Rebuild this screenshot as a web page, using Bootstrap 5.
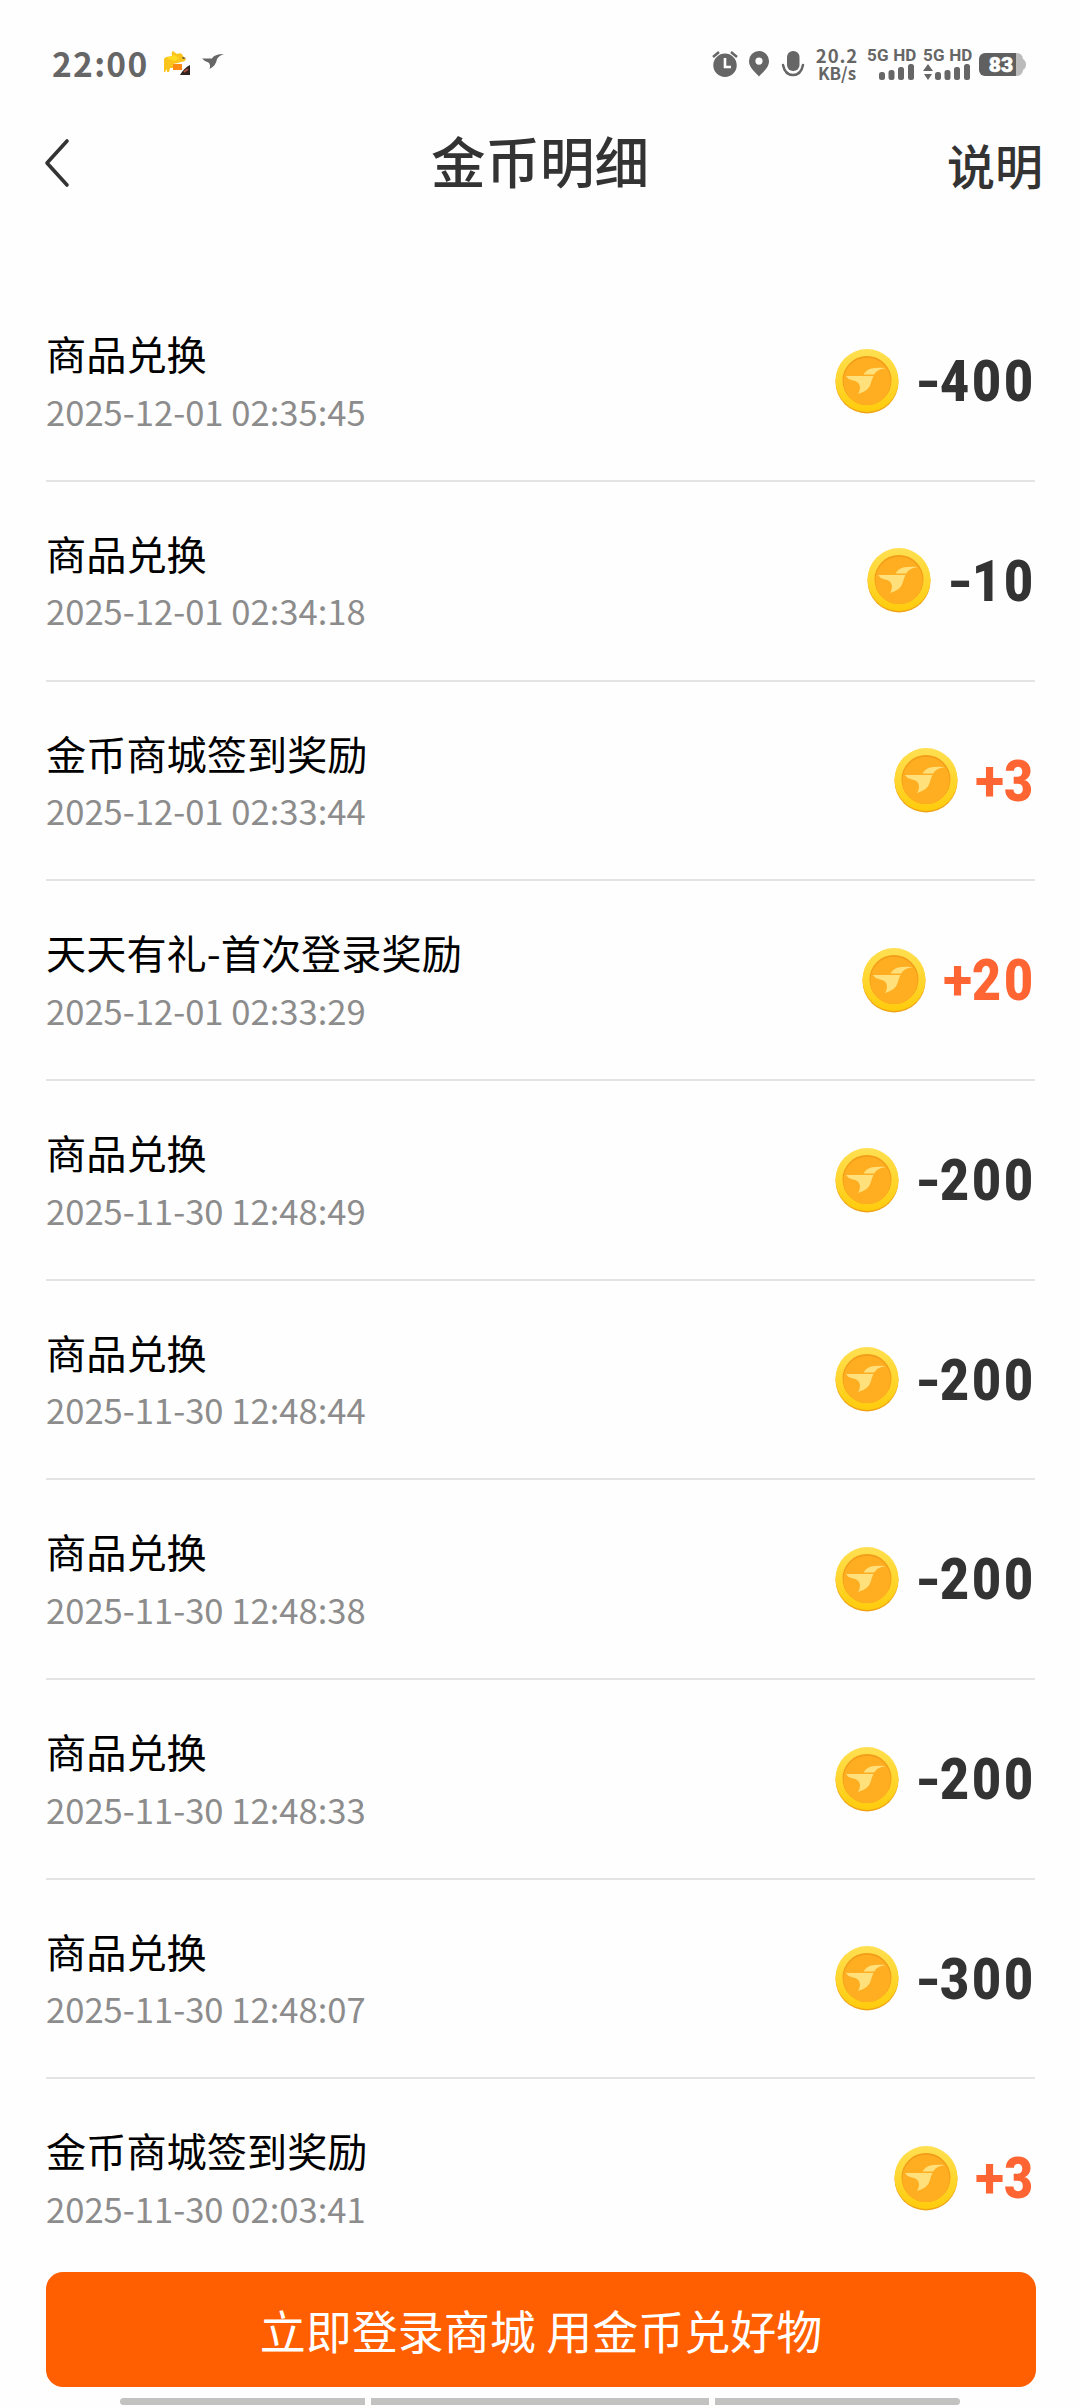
<!DOCTYPE html>
<html lang="zh-CN">
<head>
<meta charset="utf-8">
<meta name="viewport" content="width=device-width, initial-scale=1">
<title>金币明细</title>
<link rel="stylesheet" href="https://cdn.jsdelivr.net/npm/bootstrap@5.3.0/dist/css/bootstrap.min.css">
<style>
body{width:1080px;height:2408px;overflow:hidden;background:#fefefe;font-family:"Noto Sans CJK SC",sans-serif;color:#000}
svg{display:block;flex:none}
.statusbar{height:100px;padding:26px 52px 0 52px;color:#666}
.statusbar .inner{height:76px}
.clock{font-size:33.5px;font-weight:700;line-height:74px;height:76px;letter-spacing:1.3px}
.bird{margin-left:10px}
.indicators{margin-right:1px}
.speed{font-weight:700;font-size:18.5px;line-height:18px;width:44px;letter-spacing:.9px;text-align:center;padding-top:20px;margin-left:-1px}
.speed small{display:block;font-size:17px;letter-spacing:0;font-weight:700}
.sim{width:48px;padding-top:21px}
.sim span{font:700 17px/16px "Roboto",sans-serif;letter-spacing:.2px;white-space:nowrap}
.battery{margin:27px 0 0 8px}
.topbar{height:126px;padding:0 37px 0 44px;color:#333}
.topbar .side{width:120px}
.topbar h1{font-size:54.5px;font-weight:500;line-height:120px;height:126px;padding-right:7px}
.topbar .explain{font-size:48px;font-weight:500;line-height:126px;padding-top:1px}
.records{padding:56.3px 45px 0 46px;height:2046px;overflow:hidden}
.record{height:199.7px;border-bottom:2px solid #e4e4e4;padding-top:43px}
.record:last-child{border-color:transparent}
.record .name{font-size:40.2px;line-height:56px}
.record .time{font-size:34.6px;line-height:50px;margin-top:4.500px;color:#8c8c8c}
.amount{font:700 57px/64px "Roboto",sans-serif;color:#333;padding-top:23px}
.amount.plus{color:#ff6532}
.sign{margin-left:18px;width:22px;display:flex;justify-content:center;padding-top:2px}
.plus .sign{width:27px}
.sign i{font-style:normal;transform:scaleX(1.14)}
.plus .sign i{transform:scaleX(.94)}
.digits{display:flex;padding-top:2px}
.digits b{width:32px;display:flex;justify-content:center}
.digits b i{font-style:normal;transform:scaleX(.88)}
.btn.login{background:#ff5f00;color:#fff;border:0;width:990px;height:115px;border-radius:17px;font-size:46px;line-height:115px;padding:0;margin-left:46px}
.navhint{padding:11px 120px 0;gap:6px}
.navhint span{height:7px;background:#c2c2c0}
.navhint .edge{width:245px}
</style>
</head>
<body>
<header class="statusbar">
  <div class="inner d-flex">
    <div class="clock">22:00</div>
    <svg class="ms-3 mt-4" width="28" height="28" viewBox="0 0 28 28"><path d="M0 9 2 7 8 6Q7 2 9 1L13 4Q18 2 19 6L22 9Q21 12 17 12L14 13 9 14V18L6 18 5 22H3V19L1 22H0Z" fill="#fbc41c"/><path d="M2 8 10 5 15 8 11 11Z" fill="#ffdc22"/><path d="M9 14h9v6H9z" fill="#ff8a13"/><path d="M18 7l4 1-3 1Z" fill="#444"/><path d="M26 15v10H16Q20 18 26 15Z" fill="#30231f"/><path d="m20 22 4-3" stroke="#ad5441" stroke-width="1.8"/></svg>
    <svg class="bird mt-4" width="24" height="24" viewBox="0 0 24 24"><path d="M0 8.500H10Q12 4 22 4Q17 5.500 15 9Q14 16 7.500 19Q9 15 6.500 12.500Q2 11 0 8.500Z" fill="#666"/></svg>
    <div class="indicators d-flex ms-auto">
      <svg width="104" height="76" viewBox="712 26 104 76">
        <g fill="#666"><circle cx="725" cy="65.3" r="11.7"/><path d="m713 57 6-5M737 57l-6-5" stroke="#666" stroke-width="2.5"/><path d="M725 58v9h6" fill="none" stroke="#fff" stroke-width="2.6"/>
        <path fill-rule="evenodd" d="M759 51a10 10 0 0 1 10 10.3C769 68 762 73 759 76.500C756 73 749 68 749 61.300A10 10 0 0 1 759 51Zm0 6.500a3.600 3.600 0 1 0 0 7.200a3.600 3.600 0 0 0 0-7.200Z"/>
        <rect x="787" y="51" width="12.500" height="20" rx="6"/><path d="M783 65Q785 75 793 75T803 65" fill="none" stroke="#666" stroke-width="2.500" stroke-linecap="round"/></g>
      </svg>
      <div class="speed">20.2<small>KB/s</small></div>
      <div class="sim ms-2"><span class="d-block">5G HD</span>
        <svg width="48" height="17" viewBox="0 0 48 17" fill="#666"><rect x="12" y="9" width="6" height="8" rx="2.500"/><rect x="21.500" y="7" width="6" height="10" rx="2.500"/><rect x="31" y="4" width="6" height="13" rx="2.500"/><rect x="41" y="1" width="6" height="16" rx="2.500"/></svg></div>
      <div class="sim ms-2"><span class="d-block">5G HD</span>
        <svg width="48" height="17" viewBox="0 0 48 17" fill="#666"><path d="M0 8 5 1l5 7ZM1 11h8l-4 6Z"/><rect x="12" y="9" width="6" height="8" rx="2.500"/><rect x="21.500" y="7" width="6" height="10" rx="2.500"/><rect x="31" y="4" width="6" height="13" rx="2.500"/><rect x="41" y="1" width="6" height="16" rx="2.500"/></svg></div>
      <svg class="battery" width="48" height="24" viewBox="0 0 48 24"><path d="M36 0h2a6 6 0 0 1 6 6q3 2 3 5.500T44 17a6 6 0 0 1-6 6h-2Z" fill="#bbb"/><path d="M6 0h31v23H6a6 6 0 0 1-6-6V6a6 6 0 0 1 6-6Z" fill="#606060"/><text x="22" y="19" text-anchor="middle" font-family="Roboto,sans-serif" font-weight="900" font-size="21" fill="#fff" stroke="#fff" stroke-width=".6">83</text></svg>
    </div>
  </div>
</header>
<nav class="topbar d-flex justify-content-between align-items-center">
  <div class="side"><svg width="26" height="50" viewBox="0 0 26 50"><path d="M23 3 3 25 23 47" fill="none" stroke="#333" stroke-width="3.600" stroke-linecap="round" stroke-linejoin="round"/></svg></div>
  <h1 class="m-0">金币明细</h1>
  <div class="side explain text-end">说明</div>
</nav>
<main class="records" id="records"></main>
<button class="btn login d-block" type="button">立即登录商城 用金币兑好物</button>
<div class="navhint d-flex"><span class="edge rounded-start-pill"></span><span class="flex-fill"></span><span class="edge rounded-end-pill"></span></div>

<svg width="0" height="0" class="position-absolute">
  <defs><linearGradient id="rim" x1="0" y1="0" x2="0" y2="1"><stop offset="0" stop-color="#ffe052"/><stop offset="1" stop-color="#ffcc0c"/></linearGradient></defs>
  <symbol id="coin" viewBox="0 0 64 65"><circle cx="32" cy="33" r="31.500" fill="#efa417"/><circle cx="32" cy="31.500" r="31.500" fill="url(#rim)"/><circle cx="32" cy="31.500" r="24.500" fill="#f29c1b"/><circle cx="32" cy="32.500" r="23.700" fill="#ffad21"/>
  <path d="M11 27H38.500Q36.500 31 36 34Q34 42 23 45Q26 40 24.500 36Q23 32 18 31.500Q13 30.500 11 27Z" fill="#ffe07a"/><path d="M28.500 25.500Q31 21 36 19.500Q41 18.500 51 19Q44 20 41 23Q40 24.500 39 25.500Z" fill="#ffe07a"/></symbol>
</svg>
<script>
const rows=[["商品兑换","2025-12-01 02:35:45","-400"],["商品兑换","2025-12-01 02:34:18","-10"],["金币商城签到奖励","2025-12-01 02:33:44","+3"],["天天有礼-首次登录奖励","2025-12-01 02:33:29","+20"],["商品兑换","2025-11-30 12:48:49","-200"],["商品兑换","2025-11-30 12:48:44","-200"],["商品兑换","2025-11-30 12:48:38","-200"],["商品兑换","2025-11-30 12:48:33","-200"],["商品兑换","2025-11-30 12:48:07","-300"],["金币商城签到奖励","2025-11-30 02:03:41","+3"]];
document.getElementById("records").innerHTML=rows.map(([n,t,a])=>`<div class="record d-flex justify-content-between align-items-start"><div><div class="name">${n}</div><div class="time">${t}</div></div><div class="amount d-flex align-items-center ${a[0]=="+"?"plus":""}"><svg width="64" height="65"><use href="#coin"/></svg><span class="sign"><i>${a[0]}</i></span><span class="digits">${[...a.slice(1)].map(d=>`<b><i>${d}</i></b>`).join("")}</span></div></div>`).join("");
</script>
<script src="https://cdn.jsdelivr.net/npm/bootstrap@5.3.0/dist/js/bootstrap.bundle.min.js"></script>
</body>
</html>
